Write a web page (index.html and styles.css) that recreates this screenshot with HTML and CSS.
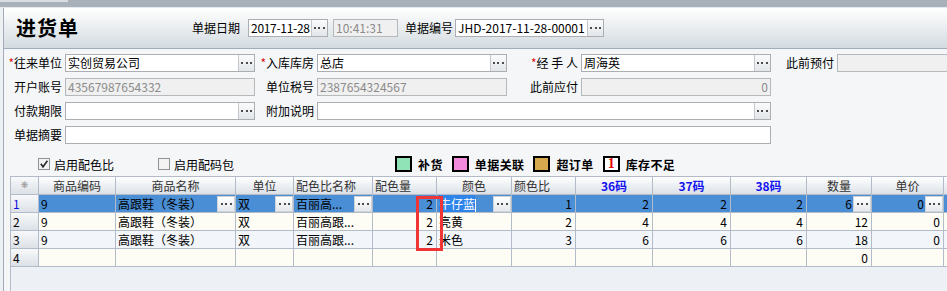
FILE: index.html
```html
<!DOCTYPE html>
<html lang="zh-CN">
<head>
    <meta charset="UTF-8">
    <title>进货单</title>
    <link rel="stylesheet" href="styles.css">
</head>
<body>
    <div class="topbar"><div class="topbar-tab"></div></div>
    <div class="page">
        <div class="header">
            <div class="title">进货单</div>
            <span class="hlabel">单据日期</span>
            <div class="field date"><span class="val">2017-11-28</span><span class="btn"></span></div>
            <div class="field off time"><span class="val">10:41:31</span></div>
            <span class="hlabel no">单据编号</span>
            <div class="field no-field"><span class="val">JHD-2017-11-28-00001</span><span class="btn"></span></div>
        </div>

        <div class="form">
            <label class="lbl first"><em>*</em>往来单位</label>
            <div class="field"><span class="val">实创贸易公司</span><span class="btn"></span></div>
            <label class="lbl"><em>*</em>入库库房</label>
            <div class="field"><span class="val">总店</span><span class="btn"></span></div>
            <label class="lbl"><em>*</em>经 手 人</label>
            <div class="field"><span class="val">周海英</span><span class="btn"></span></div>
            <label class="lbl">此前预付</label>
            <div class="field off"></div>

            <label class="lbl first">开户账号</label>
            <div class="field off"><span class="val">43567987654332</span></div>
            <label class="lbl">单位税号</label>
            <div class="field off"><span class="val">2387654324567</span></div>
            <label class="lbl">此前应付</label>
            <div class="field off"><span class="val right">0</span></div>

            <label class="lbl first">付款期限</label>
            <div class="field"><span class="val"></span><span class="btn"></span></div>
            <label class="lbl">附加说明</label>
            <div class="field span3"><span class="val"></span><span class="btn"></span></div>

            <label class="lbl first">单据摘要</label>
            <div class="field span5"><span class="val"></span></div>
        </div>

        <div class="options">
            <label class="chk">
                <svg width="12" height="12" viewBox="0 0 12 12"><rect x="0.5" y="0.5" width="11" height="11" fill="#f3f3f3" stroke="#8f9193"/><path d="M2.8 5.8 L5 8.8 L9.4 2.8" fill="none" stroke="#2a2a2a" stroke-width="1.6"/></svg>
                启用配色比
            </label>
            <label class="chk chk2">
                <svg width="12" height="12" viewBox="0 0 12 12"><rect x="0.5" y="0.5" width="11" height="11" fill="#f3f3f3" stroke="#8f9193"/></svg>
                启用配码包
            </label>
            <div class="legend">
                <span class="swatch green"></span><b>补货</b>
                <span class="swatch pink"></span><b>单据关联</b>
                <span class="swatch gold"></span><b>超订单</b>
                <span class="swatch white">1</span><b>库存不足</b>
            </div>
        </div>

        <div class="grid-wrap">
            <div class="grow ghead">
                <div class="c rh star">❋</div>
                <div class="c">商品编码</div>
                <div class="c">商品名称</div>
                <div class="c">单位</div>
                <div class="c l">配色比名称</div>
                <div class="c l">配色量</div>
                <div class="c">颜色</div>
                <div class="c l">颜色比</div>
                <div class="c size">36码</div>
                <div class="c size">37码</div>
                <div class="c size">38码</div>
                <div class="c">数量</div>
                <div class="c">单价</div>
                <div class="c"></div>
            </div>
            <div class="grow sel">
                <div class="c rh blue">1</div>
                <div class="c">9</div>
                <div class="c ed"><span class="t">高跟鞋（冬装）</span><span class="cbtn"></span></div>
                <div class="c ed"><span class="t">双</span><span class="cbtn"></span></div>
                <div class="c ed"><span class="t">百丽高...</span><span class="cbtn"></span></div>
                <div class="c r">2</div>
                <div class="c ed"><span class="t"><span class="hl">牛仔蓝</span><span class="caret"></span></span><span class="cbtn"></span></div>
                <div class="c r">1</div>
                <div class="c r">2</div>
                <div class="c r">2</div>
                <div class="c r">2</div>
                <div class="c ed"><span class="t r">6</span><span class="cbtn"></span></div>
                <div class="c ed"><span class="t r">0</span><span class="cbtn"></span></div>
                <div class="c"></div>
            </div>
            <div class="grow cream">
                <div class="c rh">2</div>
                <div class="c">9</div>
                <div class="c">高跟鞋（冬装）</div>
                <div class="c">双</div>
                <div class="c">百丽高跟...</div>
                <div class="c r">2</div>
                <div class="c">亮黄</div>
                <div class="c r">2</div>
                <div class="c r">4</div>
                <div class="c r">4</div>
                <div class="c r">4</div>
                <div class="c r">12</div>
                <div class="c r">0</div>
                <div class="c"></div>
            </div>
            <div class="grow pale">
                <div class="c rh">3</div>
                <div class="c">9</div>
                <div class="c">高跟鞋（冬装）</div>
                <div class="c">双</div>
                <div class="c">百丽高跟...</div>
                <div class="c r">2</div>
                <div class="c">米色</div>
                <div class="c r">3</div>
                <div class="c r">6</div>
                <div class="c r">6</div>
                <div class="c r">6</div>
                <div class="c r">18</div>
                <div class="c r">0</div>
                <div class="c"></div>
            </div>
            <div class="grow cream">
                <div class="c rh">4</div>
                <div class="c"></div>
                <div class="c"></div>
                <div class="c"></div>
                <div class="c"></div>
                <div class="c"></div>
                <div class="c"></div>
                <div class="c"></div>
                <div class="c"></div>
                <div class="c"></div>
                <div class="c"></div>
                <div class="c r">0</div>
                <div class="c"></div>
                <div class="c"></div>
            </div>
            <div class="mark"></div>
        </div>
    </div>
</body>
</html>
```

FILE: styles.css
```css
* {
    box-sizing: border-box;
}
body {
    margin: 0;
    width: 947px;
    height: 291px;
    overflow: hidden;
    background: #eef1f4;
    font-family: "Noto Sans CJK SC", "Liberation Sans", sans-serif;
    font-size: 12px;
    color: #000;
}

/* window strip at the top */
.topbar {
    height: 8px;
    background: #a8b0b9;
    border-bottom: 1px solid #e6eaee;
}
.topbar-tab {
    width: 68px;
    height: 2px;
    background: #dadee2;
}

.page {
    margin-left: 3px;
    border-left: 1px solid #a3acb6;
    background: #f4f6f8;
    height: 283px;
    overflow: hidden;
}

/* title bar */
.header {
    height: 41px;
    display: flex;
    align-items: center;
    padding-left: 12px;
    background: linear-gradient(#ffffff, #d3dbe0);
    border-bottom: 1px solid #9eadb9;
}
.title {
    width: 176px;
    font-size: 20px;
    font-weight: bold;
    letter-spacing: 1px;
    line-height: 24px;
}
.hlabel {
    margin-right: 8px;
    line-height: 18px;
}
.hlabel.no {
    margin-left: 7px;
    margin-right: 2px;
}
.date {
    width: 80px;
}
.date .val {
    padding: 0 1px;
    letter-spacing: -0.3px;
}
.time {
    width: 65px;
    margin-left: 5px;
}
.no-field {
    width: 149px;
}
.no-field .val {
    padding: 0 1px;
}

/* input boxes */
.field {
    display: flex;
    height: 18px;
    border: 1px solid #abafb4;
    background: #fff;
    line-height: 16px;
}
.field .val {
    flex: 1;
    padding: 0 2px;
    overflow: hidden;
    white-space: nowrap;
}
.field .val.right {
    text-align: right;
}
.field.off {
    background: #f0f0f0;
    border-color: #b6b9bc;
    color: #8b8b8b;
}
.btn {
    width: 16px;
    border-left: 1px solid #c4c8cc;
    background: linear-gradient(#fbfbfb, #e2e6e9);
    display: flex;
    align-items: center;
    justify-content: center;
}
.btn::after, .cbtn::after {
    content: "";
    width: 11px;
    height: 2px;
    background: repeating-linear-gradient(90deg, #4c4c4c 0 2px, transparent 2px 4.5px);
}

/* header form */
.form {
    display: grid;
    grid-template-columns: 61px 190px 62px 190px 74px 190px 66px 190px;
    grid-auto-rows: 18px;
    row-gap: 6px;
    padding-top: 5px;
}
.lbl {
    text-align: right;
    padding-right: 3px;
    line-height: 18px;
    white-space: nowrap;
}
.lbl.first {
    grid-column-start: 1;
}
.lbl em {
    font-style: normal;
    color: #e01010;
}
.span3 {
    grid-column: span 3;
}
.span5 {
    grid-column: span 5;
}

/* checkbox + legend line */
.options {
    display: flex;
    align-items: center;
    height: 20px;
    margin: 10px 0 2px;
    padding-left: 34px;
}
.chk {
    display: flex;
    align-items: center;
    gap: 4px;
}
.chk2 {
    margin-left: 44px;
}
.legend {
    display: flex;
    align-items: center;
    margin-left: 161px;
}
.legend b {
    margin-right: 9px;
    letter-spacing: 0.4px;
}
.swatch {
    width: 17px;
    height: 16px;
    border: 2px solid #000;
    margin-right: 6px;
}
.green { background: #8fe3b7; }
.pink { background: #f38bdc; }
.gold { background: #d7a94e; }
.white {
    background: #fff;
    color: #e80000;
    font-family: "Liberation Serif", serif;
    font-weight: bold;
    font-size: 14px;
    line-height: 12px;
    text-align: center;
}

/* goods grid */
.grid-wrap {
    position: relative;
    margin-left: 6px;
    height: 115px;
    border-top: 1px solid #b2bbc7;
    border-left: 1px solid #b2bbc7;
    background: #edf0f4;
    overflow: hidden;
}
.grow {
    display: grid;
    grid-template-columns: 28px 77px 120px 58px 79px 64px 75px 64px 77px 78px 76px 65px 72px 57px;
    width: max-content;
}
.c {
    height: 18px;
    border-right: 1px solid #b2bbc7;
    border-bottom: 1px solid #b2bbc7;
    padding: 0 2px;
    line-height: 17px;
    white-space: nowrap;
    overflow: hidden;
}
.r {
    text-align: right;
    padding-right: 3px;
}
.ghead .c {
    background: linear-gradient(#ffffff, #dbe1e7);
    text-align: center;
    color: #333;
}
.ghead .c.l {
    text-align: left;
}
.ghead .size {
    color: #1414f0;
    font-weight: bold;
}
.ghead .star {
    color: #9a9a9a;
    font-family: "DejaVu Sans", sans-serif;
    font-size: 9px;
}
.cream .c { background: #fdfdf6; }
.pale .c { background: #f2f5fa; }
.sel .c { background: #4a8ed6; }
.grow .rh {
    background: linear-gradient(#f8f9fa, #dce1e7);
}
.rh.blue {
    color: #1010e0;
}
.ed {
    display: flex;
    align-items: center;
    padding-right: 0;
}
.ed .t {
    flex: 1;
    overflow: hidden;
}
.ed .t.r {
    padding-right: 1px;
}
.cbtn {
    width: 18px;
    height: 16px;
    border: 1px solid #cfd3d7;
    background: linear-gradient(#ffffff, #e4e8ec);
    display: flex;
    align-items: center;
    justify-content: center;
}
.hl {
    background: #2f84ea;
    color: #fff;
}
.caret {
    display: inline-block;
    width: 1px;
    height: 13px;
    background: #fff;
    vertical-align: middle;
}

/* red annotation box */
.mark {
    position: absolute;
    left: 405px;
    top: 19px;
    width: 27px;
    height: 55px;
    border: 3px solid #ef3535;
}
```
